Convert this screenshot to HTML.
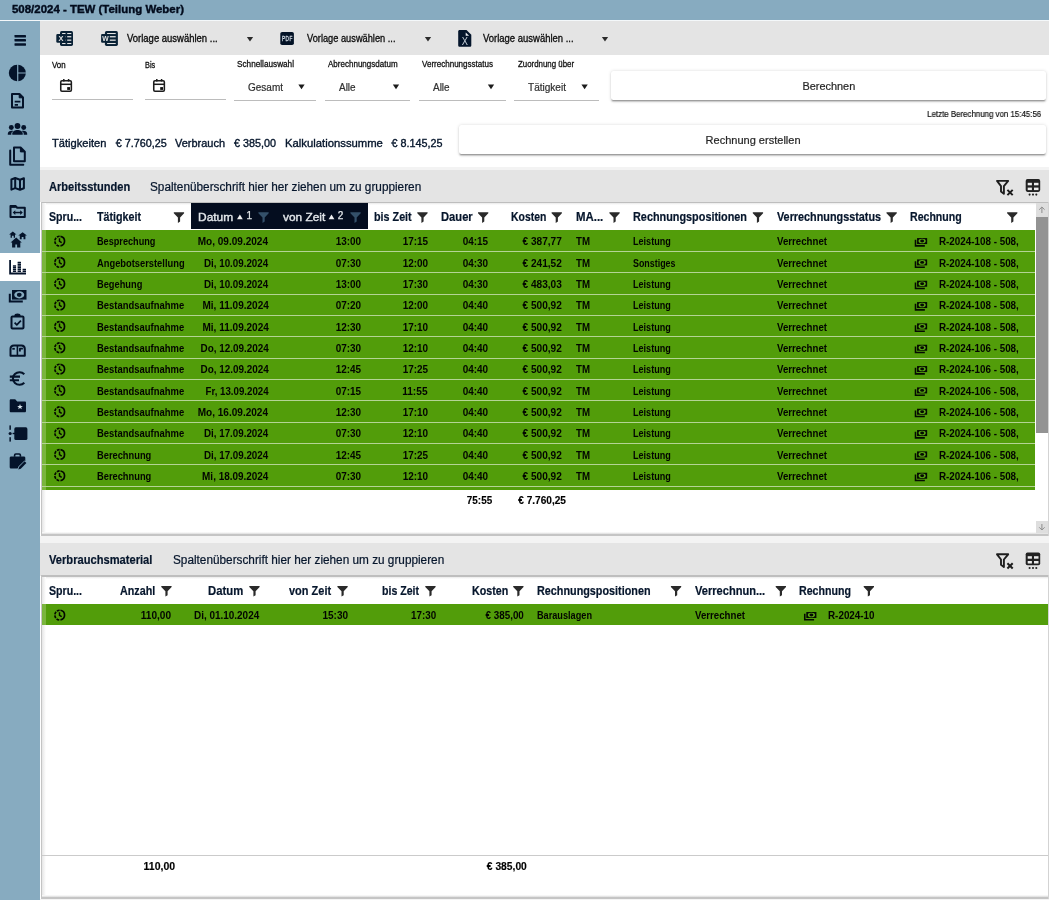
<!DOCTYPE html>
<html lang="de"><head><meta charset="utf-8"><title>508/2024 - TEW (Teilung Weber)</title>
<style>
html,body{margin:0;padding:0}
body{width:1049px;height:900px;position:relative;overflow:hidden;background:#fff;font-family:"Liberation Sans",sans-serif;color:#06162c}
#bg div{position:absolute}
#tx{will-change:transform}
#tx span{position:absolute;white-space:pre;display:block}
#ic{will-change:transform}
#ic svg{position:absolute;overflow:visible}
</style></head><body>
<div id="bg">
<div style="left:0px;top:0px;width:1049px;height:20px;background:#87abc0;"></div>
<div style="left:0px;top:20px;width:1049px;height:1px;background:#f4f8fa;"></div>
<div style="left:0px;top:21px;width:40px;height:879px;background:#87abc0;"></div>
<div style="left:0px;top:253px;width:40px;height:28px;background:#fff;"></div>
<div style="left:40px;top:21px;width:1009px;height:34px;background:#e4e4e4;"></div>
<div style="left:52px;top:99px;width:81px;height:1px;background:#bcbcbc;"></div>
<div style="left:145px;top:99px;width:81px;height:1px;background:#bcbcbc;"></div>
<div style="left:233.5px;top:100px;width:82.5px;height:1px;background:#bcbcbc;"></div>
<div style="left:324.5px;top:100px;width:85.5px;height:1px;background:#bcbcbc;"></div>
<div style="left:418.5px;top:100px;width:87.5px;height:1px;background:#bcbcbc;"></div>
<div style="left:513.5px;top:100px;width:85.5px;height:1px;background:#bcbcbc;"></div>
<div style="left:610.6px;top:71.2px;width:435.6px;height:28.7px;background:#fff;border-radius:2.5px;box-shadow:0 2px 1.2px -1.3px rgba(0,0,0,.24),0 1.5px 1.6px rgba(0,0,0,.15),0 .8px 3.6px rgba(0,0,0,.14);"></div>
<div style="left:458.8px;top:125.2px;width:587.4px;height:28.6px;background:#fff;border-radius:2.5px;box-shadow:0 2px 1.2px -1.3px rgba(0,0,0,.24),0 1.5px 1.6px rgba(0,0,0,.15),0 .8px 3.6px rgba(0,0,0,.14);"></div>
<div style="left:40px;top:167.3px;width:1009px;height:2.6px;background:#f3f3f3;"></div>
<div style="left:40px;top:169.9px;width:1009px;height:32.29999999999998px;background:#e4e4e4;"></div>
<div style="left:40.7px;top:201.6px;width:1008.3px;height:1.4px;background:#bebebe;"></div>
<div style="left:42px;top:203.0px;width:1007px;height:2.4px;background:linear-gradient(180deg,#e9e9e9,#fff);"></div>
<div style="left:40.7px;top:202.2px;width:1.5px;height:332.50000000000006px;background:#c4c4c4;"></div>
<div style="left:42.2px;top:203.0px;width:3.6px;height:330.70000000000005px;background:linear-gradient(90deg,#e6e6e6,#fff);"></div>
<div style="left:42.2px;top:531.5px;width:1006.8px;height:2.2px;background:linear-gradient(180deg,#fff,#dcdcdc);"></div>
<div style="left:40.7px;top:533.7px;width:1008.3px;height:2px;background:#c5c5c5;"></div>
<div style="left:40px;top:535.7px;width:1009px;height:8px;background:#f4f4f4;"></div>
<div style="left:190.7px;top:202.79999999999998px;width:177.1px;height:26.669999999999998px;background:#040d1f;"></div>
<div style="left:42px;top:230.17px;width:992.9px;height:259.43000000000006px;background:#529d0a;"></div>
<div style="left:42px;top:230.17px;width:4.2px;height:259.43000000000006px;background:#7ab53d;"></div>
<div style="left:42px;top:251.003px;width:992.9px;height:1.05px;background:#b4d494;"></div>
<div style="left:42px;top:272.336px;width:992.9px;height:1.05px;background:#b4d494;"></div>
<div style="left:42px;top:293.669px;width:992.9px;height:1.05px;background:#b4d494;"></div>
<div style="left:42px;top:315.00199999999995px;width:992.9px;height:1.05px;background:#b4d494;"></div>
<div style="left:42px;top:336.335px;width:992.9px;height:1.05px;background:#b4d494;"></div>
<div style="left:42px;top:357.668px;width:992.9px;height:1.05px;background:#b4d494;"></div>
<div style="left:42px;top:379.001px;width:992.9px;height:1.05px;background:#b4d494;"></div>
<div style="left:42px;top:400.33399999999995px;width:992.9px;height:1.05px;background:#b4d494;"></div>
<div style="left:42px;top:421.667px;width:992.9px;height:1.05px;background:#b4d494;"></div>
<div style="left:42px;top:443.0px;width:992.9px;height:1.05px;background:#b4d494;"></div>
<div style="left:42px;top:464.33299999999997px;width:992.9px;height:1.05px;background:#b4d494;"></div>
<div style="left:42px;top:485.66599999999994px;width:992.9px;height:1.05px;background:#b4d494;"></div>
<div style="left:1036px;top:203.0px;width:11.7px;height:13.7px;background:#dedede;"></div>
<div style="left:1036px;top:521.2px;width:11.7px;height:11.6px;background:#dedede;"></div>
<div style="left:1036px;top:216.7px;width:11.7px;height:216.7px;background:#939393;"></div>
<div style="left:40px;top:540.3px;width:1009px;height:2.6px;background:#f3f3f3;"></div>
<div style="left:40px;top:542.9px;width:1009px;height:32.89999999999998px;background:#e4e4e4;"></div>
<div style="left:40.7px;top:575.1999999999999px;width:1008.3px;height:1.4px;background:#bebebe;"></div>
<div style="left:42px;top:576.5999999999999px;width:1007px;height:2.4px;background:linear-gradient(180deg,#e9e9e9,#fff);"></div>
<div style="left:40.7px;top:575.8px;width:1.5px;height:322.30000000000007px;background:#c4c4c4;"></div>
<div style="left:42.2px;top:576.5999999999999px;width:3.6px;height:320.50000000000006px;background:linear-gradient(90deg,#e6e6e6,#fff);"></div>
<div style="left:42.2px;top:894.9px;width:1006.8px;height:2.2px;background:linear-gradient(180deg,#fff,#dcdcdc);"></div>
<div style="left:40.7px;top:897.1px;width:1008.3px;height:2px;background:#c5c5c5;"></div>
<div style="left:40px;top:899.1px;width:1009px;height:8px;background:#f4f4f4;"></div>
<div style="left:42px;top:603.8px;width:1007px;height:20.8px;background:#529d0a;"></div>
<div style="left:42px;top:603.8px;width:4.2px;height:20.8px;background:#7ab53d;"></div>
<div style="left:42.2px;top:855.1px;width:1006.8px;height:1.2px;background:#cbcbcb;"></div>
<div style="left:1047.7px;top:201.6px;width:1.3px;height:334.1000000000001px;background:#d3d3d3;"></div>
<div style="left:1047.7px;top:575.1999999999999px;width:1.3px;height:323.9000000000001px;background:#d3d3d3;"></div>
</div>
<div id="ic">
<svg width="1049" height="900" viewBox="0 0 1049 900" style="left:0;top:0">
<rect x="14.5" y="35" width="11.5" height="2.4" rx=".4" fill="#04132a"/>
<rect x="14.5" y="39.1" width="11.5" height="2.4" rx=".4" fill="#04132a"/>
<rect x="14.5" y="43.3" width="11.5" height="2.4" rx=".4" fill="#04132a"/>
<g fill="#04132a"><path d="M17.1 64.7 A8.3 8.3 0 0 0 17.1 81.3 Z"/><path d="M18.3 64.7 A8.3 8.3 0 0 1 25.8 72.4 L18.3 72.4 Z"/><path d="M18.3 73.6 L25.8 73.6 A8.3 8.3 0 0 1 18.3 81.3 Z"/></g>
<g fill="none" stroke="#04132a" stroke-width="2" stroke-linejoin="round"><path d="M12 94 H19.5 L23 97.5 V107.5 H12 Z"/><path d="M19.2 94.2 V97.8 H22.8 Z" stroke-width="1" fill="#04132a"/><path d="M14.7 101.6 H20.4 M14.7 104.9 H18" stroke-width="1.6"/></g>
<g fill="#04132a"><circle cx="17.5" cy="126" r="2.9"/><circle cx="11.3" cy="127.5" r="2.45"/><circle cx="23.7" cy="127.5" r="2.45"/><path d="M12.3 134.8 V133.6 C12.3 131 15 129.9 17.5 129.9 S22.7 131 22.7 133.6 V134.8 Z"/><path d="M7.8 134.8 V133.8 C7.8 131.7 9.6 130.8 11.6 130.8 C12.3 130.8 12.9 130.9 13.4 131.05 C11.9 131.9 11.3 132.7 11.3 133.8 V134.8 Z"/><path d="M27.2 134.8 V133.8 C27.2 131.7 25.4 130.8 23.4 130.8 C22.7 130.8 22.1 130.9 21.6 131.05 C23.1 131.9 23.7 132.7 23.7 133.8 V134.8 Z"/></g>
<g fill="none" stroke="#04132a" stroke-width="2" stroke-linejoin="round"><path d="M14 147.5 H20.6 L24.8 151.7 V161.3 H14 Z"/><path d="M20.4 147.8 V151.9 H24.5 Z" stroke-width="1" fill="#04132a"/><path d="M10.2 150.5 V164.8 H23.3" stroke-linecap="round"/></g>
<g fill="none" stroke="#04132a" stroke-width="2" stroke-linejoin="round"><path d="M11.4 179.5 L15.2 178 L20 179.7 L23.9 178.2 V188.3 L20 189.8 L15.2 188.1 L11.4 189.6 Z"/><path d="M15.2 178 V188.1 M20 179.7 V189.8"/></g>
<g fill="none" stroke="#04132a" stroke-width="2" stroke-linejoin="round"><path d="M10.5 206 H15.5 L17.2 207.8 H24.8 V217 H10.5 Z"/><path d="M10.5 206.6 H15.8" stroke-width="2.6"/></g>
<g fill="#04132a"><rect x="14.5" y="211.8" width="6.5" height="1.5"/><path d="M15.3 210.2 V214.9 L12.7 212.55 Z M20.2 210.2 V214.9 L22.8 212.55 Z"/></g>
<g fill="#04132a"><path d="M12.8 231.4 L16.5 234.424 H15.0 V237.70000000000002 H13.700000000000001 V235.81000000000003 H11.9 V237.70000000000002 H10.600000000000001 V234.424 H9.100000000000001 Z"/><path d="M22.6 232.2 L26.900000000000002 235.56 H25.400000000000002 V239.2 H23.5 V237.1 H21.700000000000003 V239.2 H19.8 V235.56 H18.3 Z"/><path d="M16.2 237.6 L21.8 242.4 H20.3 V247.6 H17.099999999999998 V244.6 H15.299999999999999 V247.6 H12.1 V242.4 H10.6 Z"/></g>
<g fill="#04132a"><path d="M9.2 260 H11 V272.6 H26 V274.5 H9.2 Z"/>
<rect x="12.9" y="270.55" width="3.2" height="1.45" rx=".3"/><rect x="12.9" y="268.80" width="3.2" height="1.45" rx=".3"/><rect x="12.9" y="267.05" width="3.2" height="1.45" rx=".3"/><rect x="12.9" y="265.30" width="3.2" height="1.45" rx=".3"/><rect x="17.6" y="270.55" width="3.4" height="1.45" rx=".3"/><rect x="17.6" y="268.80" width="3.4" height="1.45" rx=".3"/><rect x="17.6" y="267.05" width="3.4" height="1.45" rx=".3"/><rect x="17.6" y="265.30" width="3.4" height="1.45" rx=".3"/><rect x="17.6" y="263.55" width="3.4" height="1.45" rx=".3"/><rect x="17.6" y="261.80" width="3.4" height="1.45" rx=".3"/><rect x="22.6" y="270.55" width="3.4" height="1.45" rx=".3"/><rect x="22.6" y="268.80" width="3.4" height="1.45" rx=".3"/></g>
<g><path d="M9.8 293.8 V301.5 H22.8" fill="none" stroke="#04132a" stroke-width="2"/><rect x="12" y="290" width="14.5" height="9.6" fill="#04132a"/><ellipse cx="19.25" cy="294.8" rx="5" ry="3.6" fill="#87abc0"/><ellipse cx="19.25" cy="294.8" rx="2.4" ry="2.1" fill="#04132a"/></g>
<g fill="none" stroke="#04132a" stroke-linejoin="round"><rect x="11.5" y="316.6" width="12" height="12" rx="1" stroke-width="2"/><path d="M15.2 316.4 V315.6 C15.2 314 19.8 314 19.8 315.6 V316.4" stroke-width="1.6" fill="#04132a"/><path d="M14.6 322.6 L16.8 324.8 L20.9 320.6" stroke-width="1.7"/></g>
<g fill="none" stroke="#04132a" stroke-width="2" stroke-linejoin="round"><path d="M10.5 355.8 V349 C10.5 346.6 12 345.5 14 345.5 H21.5 C23.6 345.5 24.8 346.8 24.8 349 V355.8 Z"/><path d="M17.4 346 V355.5" stroke-width="1.6"/><path d="M12.3 348.8 H14.8" stroke-width="1.8"/><path d="M19.9 351.6 V348.7 H22.9" stroke-width="1.8"/></g>
<g fill="none" stroke="#04132a" stroke-width="2.1" stroke-linecap="butt"><path d="M24.3 374.2 A6.6 6.2 0 1 0 24.3 382.8"/><path d="M9.8 376.6 H20 M9.8 380.3 H19"/></g>
<g><path d="M9.7 400.6 C9.7 399.8 10.2 399.3 11 399.3 H15.2 L17.2 401.4 H24.8 C25.6 401.4 26 401.9 26 402.7 V411 C26 411.8 25.5 412.3 24.7 412.3 H11 C10.2 412.3 9.7 411.8 9.7 411 Z" fill="#04132a"/><path d="M20 403.9 L20.75 405.9 L22.85 405.95 L21.2 407.25 L21.8 409.3 L20 408.1 L18.2 409.3 L18.8 407.25 L17.15 405.95 L19.25 405.9 Z" fill="#d5e2ea"/></g>
<g fill="#04132a"><rect x="9.4" y="425.4" width="1.5" height="4.4"/><rect x="9.4" y="437.2" width="1.5" height="4.4"/><circle cx="10.15" cy="433.5" r="1.55"/><rect x="12.6" y="432.8" width="2.5" height="1.4"/><rect x="14.3" y="427.3" width="13.1" height="12.7" rx="1.6"/></g>
<g><path d="M9.7 458 C9.7 457 10.3 456.5 11.2 456.5 H23.8 C24.7 456.5 25.3 457 25.3 458 V460.2 L17.5 468.5 H11.2 C10.3 468.5 9.7 468 9.7 467 Z" fill="#04132a"/><path d="M14.6 456.8 V455.2 C14.6 454.4 15.1 454 15.8 454 H19.2 C19.9 454 20.4 454.4 20.4 455.2 V456.8" fill="none" stroke="#04132a" stroke-width="1.6"/><path d="M18.3 469.4 L19 466.9 L24.6 461.3 L26.4 463.1 L20.8 468.7 Z" fill="#04132a" stroke="#87abc0" stroke-width="1.3" paint-order="stroke"/></g>
<rect x="60" y="31.1" width="13" height="14.8" rx="1.6" fill="#0a2236"/><rect x="62.1" y="33.0" width="3.4" height="1.05" fill="#e4e4e4"/><rect x="62.1" y="36.1" width="3.4" height="1.25" fill="#e4e4e4"/><rect x="62.1" y="39.55" width="3.4" height="1.25" fill="#e4e4e4"/><rect x="62.1" y="43.0" width="3.4" height="1.05" fill="#e4e4e4"/><rect x="67.2" y="33.0" width="4.1" height="1.05" fill="#e4e4e4"/><rect x="67.2" y="36.1" width="4.1" height="1.25" fill="#e4e4e4"/><rect x="67.2" y="39.55" width="4.1" height="1.25" fill="#e4e4e4"/><rect x="67.2" y="43.0" width="4.1" height="1.05" fill="#e4e4e4"/>
<rect x="56.3" y="33.9" width="9.1" height="8.9" rx="1.2" fill="#0a2236"/>
<text x="60.85" y="41.1" font-family="Liberation Sans,sans-serif" font-size="7.4" font-weight="700" fill="#e4e4e4" text-anchor="middle">X</text>
<rect x="104.9" y="31.1" width="13" height="14.8" rx="1.6" fill="#0a2236"/><rect x="107.1" y="33.0" width="8.6" height="1.05" fill="#e4e4e4"/><rect x="107.1" y="36.1" width="8.6" height="1.25" fill="#e4e4e4"/><rect x="107.1" y="39.55" width="8.6" height="1.25" fill="#e4e4e4"/><rect x="107.1" y="43.0" width="8.6" height="1.05" fill="#e4e4e4"/>
<rect x="101.1" y="33.9" width="8.7" height="8.9" rx="1.2" fill="#0a2236"/>
<text x="105.45" y="41" font-family="Liberation Sans,sans-serif" font-size="6.8" font-weight="700" fill="#e4e4e4" text-anchor="middle">W</text>
<rect x="280.3" y="31.9" width="13.6" height="13.1" rx="1.8" fill="#031226"/>
<text transform="translate(281.9 40.85) scale(.7 1)" font-family="Liberation Sans,sans-serif" font-size="6.7" letter-spacing=".75" fill="#d4dde6" stroke="#d4dde6" stroke-width=".3">PDF</text>
<path d="M458.2 31.5 C458.2 30.5 458.8 30 459.7 30 H466.5 L471.3 34.8 V45.3 C471.3 46.3 470.7 46.8 469.8 46.8 H459.7 C458.8 46.8 458.2 46.3 458.2 45.3 Z" fill="#04152b"/>
<path d="M465.7 32.4 V35.8 H469.1 Z" fill="#e8edf2"/>
<text x="464.85" y="44.8" font-family="Liberation Sans,sans-serif" font-size="10.6" fill="#c9d3dc" text-anchor="middle" textLength="6.2" lengthAdjust="spacingAndGlyphs">X</text>
<g fill="none" stroke="#1c1c1c"><rect x="60.75" y="80.7" width="10.6" height="10.6" rx="1.2" stroke-width="1.55"/><path d="M60.75 84.3 H71.35" stroke-width="1.5"/><path d="M63.800000000000004 79 V81.6 M68.6 79 V81.6" stroke-width="1.5"/></g><rect x="67.2" y="87.1" width="2.8" height="2.8" fill="#111"/>
<g fill="none" stroke="#1c1c1c"><rect x="153.75" y="80.7" width="10.6" height="10.6" rx="1.2" stroke-width="1.55"/><path d="M153.75 84.3 H164.35" stroke-width="1.5"/><path d="M156.79999999999998 79 V81.6 M161.6 79 V81.6" stroke-width="1.5"/></g><rect x="160.2" y="87.1" width="2.8" height="2.8" fill="#111"/>
<path d="M246.85 36.9 H253.15 L250 41.5 Z" fill="#2b2b2b"/>
<path d="M424.85 36.9 H431.15 L428 41.5 Z" fill="#2b2b2b"/>
<path d="M601.85 36.9 H608.15 L605 41.5 Z" fill="#2b2b2b"/>
<path d="M298.35 84.6 H304.65 L301.5 89.2 Z" fill="#1c1c1c"/>
<path d="M392.85 84.6 H399.15 L396 89.2 Z" fill="#1c1c1c"/>
<path d="M487.85 84.6 H494.15 L491 89.2 Z" fill="#1c1c1c"/>
<path d="M581.45 84.6 H587.75 L584.6 89.2 Z" fill="#1c1c1c"/>
<path d="M237.0 219.3 H242.8 L239.9 214.6 Z" fill="#f0f0f0"/>
<path d="M328.6 219.3 H334.4 L331.5 214.6 Z" fill="#f0f0f0"/>
<path d="M173.8 212.3 H184.10000000000002 V213.20000000000002 L180.10000000000002 217.5 V221.5 L177.9 222.9 V217.5 L173.8 213.20000000000002 Z" fill="#2a2a2a"/>
<path d="M417.3 212.3 H427.6 V213.20000000000002 L423.6 217.5 V221.5 L421.40000000000003 222.9 V217.5 L417.3 213.20000000000002 Z" fill="#2a2a2a"/>
<path d="M478 212.3 H488.3 V213.20000000000002 L484.3 217.5 V221.5 L482.1 222.9 V217.5 L478 213.20000000000002 Z" fill="#2a2a2a"/>
<path d="M551.6 212.3 H561.9 V213.20000000000002 L557.9 217.5 V221.5 L555.7 222.9 V217.5 L551.6 213.20000000000002 Z" fill="#2a2a2a"/>
<path d="M609.4 212.3 H619.6999999999999 V213.20000000000002 L615.6999999999999 217.5 V221.5 L613.5 222.9 V217.5 L609.4 213.20000000000002 Z" fill="#2a2a2a"/>
<path d="M752.8 212.3 H763.0999999999999 V213.20000000000002 L759.0999999999999 217.5 V221.5 L756.9 222.9 V217.5 L752.8 213.20000000000002 Z" fill="#2a2a2a"/>
<path d="M886.5 212.3 H896.8 V213.20000000000002 L892.8 217.5 V221.5 L890.6 222.9 V217.5 L886.5 213.20000000000002 Z" fill="#2a2a2a"/>
<path d="M1007.1 212.3 H1017.4 V213.20000000000002 L1013.4 217.5 V221.5 L1011.2 222.9 V217.5 L1007.1 213.20000000000002 Z" fill="#2a2a2a"/>
<path d="M258.4 212.3 H268.7 V213.20000000000002 L264.7 217.5 V221.5 L262.5 222.9 V217.5 L258.4 213.20000000000002 Z" fill="#34506a"/>
<path d="M350.4 212.3 H360.7 V213.20000000000002 L356.7 217.5 V221.5 L354.5 222.9 V217.5 L350.4 213.20000000000002 Z" fill="#34506a"/>
<path d="M161.3 586 H171.60000000000002 V586.9 L167.60000000000002 591.2 V595.2 L165.4 596.6 V591.2 L161.3 586.9 Z" fill="#2a2a2a"/>
<path d="M249.3 586 H259.6 V586.9 L255.60000000000002 591.2 V595.2 L253.4 596.6 V591.2 L249.3 586.9 Z" fill="#2a2a2a"/>
<path d="M337.4 586 H347.7 V586.9 L343.7 591.2 V595.2 L341.5 596.6 V591.2 L337.4 586.9 Z" fill="#2a2a2a"/>
<path d="M425.3 586 H435.6 V586.9 L431.6 591.2 V595.2 L429.40000000000003 596.6 V591.2 L425.3 586.9 Z" fill="#2a2a2a"/>
<path d="M513.2 586 H523.5 V586.9 L519.5 591.2 V595.2 L517.3000000000001 596.6 V591.2 L513.2 586.9 Z" fill="#2a2a2a"/>
<path d="M670.9 586 H681.1999999999999 V586.9 L677.1999999999999 591.2 V595.2 L675.0 596.6 V591.2 L670.9 586.9 Z" fill="#2a2a2a"/>
<path d="M775.7 586 H786.0 V586.9 L782.0 591.2 V595.2 L779.8000000000001 596.6 V591.2 L775.7 586.9 Z" fill="#2a2a2a"/>
<path d="M863.7 586 H874.0 V586.9 L870.0 591.2 V595.2 L867.8000000000001 596.6 V591.2 L863.7 586.9 Z" fill="#2a2a2a"/>
<g fill="none" stroke="#1e1e1e" stroke-width="1.9" stroke-linejoin="round"><path d="M997 180.9 H1008.2 L1003.9 186.10000000000002 V193.70000000000002 L1001 191.4 V186.10000000000002 Z"/><path d="M1007.4 189.9 L1012.7 195.10000000000002 M1012.7 189.9 L1007.4 195.10000000000002" stroke-width="2"/></g>
<rect x="1025.7" y="179.1" width="14.5" height="12.8" rx="1.8" fill="#222"/><rect x="1027.7" y="182.79999999999998" width="4.2" height="2.5" fill="#ececec"/><rect x="1027.7" y="187.6" width="4.2" height="2.5" fill="#ececec"/><rect x="1034" y="182.79999999999998" width="4.5" height="2.5" fill="#ececec"/><rect x="1034" y="187.6" width="4.5" height="2.5" fill="#ececec"/><circle cx="1029.6" cy="194.6" r="1.05" fill="#222"/><circle cx="1033" cy="194.6" r="1.05" fill="#222"/><circle cx="1036.3" cy="194.6" r="1.05" fill="#222"/>
<g fill="none" stroke="#1e1e1e" stroke-width="1.9" stroke-linejoin="round"><path d="M997 554.3000000000001 H1008.2 L1003.9 559.5 V567.1 L1001 564.8000000000001 V559.5 Z"/><path d="M1007.4 563.3000000000001 L1012.7 568.5 M1012.7 563.3000000000001 L1007.4 568.5" stroke-width="2"/></g>
<rect x="1025.7" y="552.5" width="14.5" height="12.8" rx="1.8" fill="#222"/><rect x="1027.7" y="556.2" width="4.2" height="2.5" fill="#ececec"/><rect x="1027.7" y="561.0" width="4.2" height="2.5" fill="#ececec"/><rect x="1034" y="556.2" width="4.5" height="2.5" fill="#ececec"/><rect x="1034" y="561.0" width="4.5" height="2.5" fill="#ececec"/><circle cx="1029.6" cy="568.0" r="1.05" fill="#222"/><circle cx="1033" cy="568.0" r="1.05" fill="#222"/><circle cx="1036.3" cy="568.0" r="1.05" fill="#222"/>
<g fill="none" stroke="#030700" stroke-width="1.65"><path d="M60.46 236.33 A4.85 4.85 0 0 1 60.46 245.91"/><path d="M59.7 245.96999999999997 A4.85 4.85 0 0 1 59.7 236.26999999999998" stroke-dasharray="2.85 0.96" stroke-dashoffset="-0.48"/><path d="M59.5 238.21999999999997 V241.31999999999996 L61.7 242.71999999999997" stroke-width="1.45"/></g>
<g><path d="M915.5 239.87 V245.87 H924.8499999999999" fill="none" stroke="#050a02" stroke-width="1.55"/><rect x="917.05" y="238.07" width="10.1" height="6" fill="#050a02"/><ellipse cx="922.15" cy="241.07" rx="3.6" ry="2.3" fill="#5aa814"/><ellipse cx="922.15" cy="241.07" rx="1.95" ry="1.45" fill="#050a02"/></g>
<g fill="none" stroke="#030700" stroke-width="1.65"><path d="M60.46 257.66 A4.85 4.85 0 0 1 60.46 267.24"/><path d="M59.7 267.303 A4.85 4.85 0 0 1 59.7 257.60299999999995" stroke-dasharray="2.85 0.96" stroke-dashoffset="-0.48"/><path d="M59.5 259.553 V262.65299999999996 L61.7 264.053" stroke-width="1.45"/></g>
<g><path d="M915.5 261.203 V267.203 H924.8499999999999" fill="none" stroke="#050a02" stroke-width="1.55"/><rect x="917.05" y="259.40299999999996" width="10.1" height="6" fill="#050a02"/><ellipse cx="922.15" cy="262.40299999999996" rx="3.6" ry="2.3" fill="#5aa814"/><ellipse cx="922.15" cy="262.40299999999996" rx="1.95" ry="1.45" fill="#050a02"/></g>
<g fill="none" stroke="#030700" stroke-width="1.65"><path d="M60.46 279.00 A4.85 4.85 0 0 1 60.46 288.58"/><path d="M59.7 288.636 A4.85 4.85 0 0 1 59.7 278.936" stroke-dasharray="2.85 0.96" stroke-dashoffset="-0.48"/><path d="M59.5 280.886 V283.986 L61.7 285.386" stroke-width="1.45"/></g>
<g><path d="M915.5 282.536 V288.536 H924.8499999999999" fill="none" stroke="#050a02" stroke-width="1.55"/><rect x="917.05" y="280.736" width="10.1" height="6" fill="#050a02"/><ellipse cx="922.15" cy="283.736" rx="3.6" ry="2.3" fill="#5aa814"/><ellipse cx="922.15" cy="283.736" rx="1.95" ry="1.45" fill="#050a02"/></g>
<g fill="none" stroke="#030700" stroke-width="1.65"><path d="M60.46 300.33 A4.85 4.85 0 0 1 60.46 309.91"/><path d="M59.7 309.969 A4.85 4.85 0 0 1 59.7 300.26899999999995" stroke-dasharray="2.85 0.96" stroke-dashoffset="-0.48"/><path d="M59.5 302.219 V305.31899999999996 L61.7 306.719" stroke-width="1.45"/></g>
<g><path d="M915.5 303.86899999999997 V309.86899999999997 H924.8499999999999" fill="none" stroke="#050a02" stroke-width="1.55"/><rect x="917.05" y="302.06899999999996" width="10.1" height="6" fill="#050a02"/><ellipse cx="922.15" cy="305.06899999999996" rx="3.6" ry="2.3" fill="#5aa814"/><ellipse cx="922.15" cy="305.06899999999996" rx="1.95" ry="1.45" fill="#050a02"/></g>
<g fill="none" stroke="#030700" stroke-width="1.65"><path d="M60.46 321.66 A4.85 4.85 0 0 1 60.46 331.24"/><path d="M59.7 331.30199999999996 A4.85 4.85 0 0 1 59.7 321.6019999999999" stroke-dasharray="2.85 0.96" stroke-dashoffset="-0.48"/><path d="M59.5 323.55199999999996 V326.65199999999993 L61.7 328.05199999999996" stroke-width="1.45"/></g>
<g><path d="M915.5 325.20199999999994 V331.20199999999994 H924.8499999999999" fill="none" stroke="#050a02" stroke-width="1.55"/><rect x="917.05" y="323.40199999999993" width="10.1" height="6" fill="#050a02"/><ellipse cx="922.15" cy="326.40199999999993" rx="3.6" ry="2.3" fill="#5aa814"/><ellipse cx="922.15" cy="326.40199999999993" rx="1.95" ry="1.45" fill="#050a02"/></g>
<g fill="none" stroke="#030700" stroke-width="1.65"><path d="M60.46 342.99 A4.85 4.85 0 0 1 60.46 352.58"/><path d="M59.7 352.635 A4.85 4.85 0 0 1 59.7 342.93499999999995" stroke-dasharray="2.85 0.96" stroke-dashoffset="-0.48"/><path d="M59.5 344.885 V347.98499999999996 L61.7 349.385" stroke-width="1.45"/></g>
<g><path d="M915.5 346.53499999999997 V352.53499999999997 H924.8499999999999" fill="none" stroke="#050a02" stroke-width="1.55"/><rect x="917.05" y="344.73499999999996" width="10.1" height="6" fill="#050a02"/><ellipse cx="922.15" cy="347.73499999999996" rx="3.6" ry="2.3" fill="#5aa814"/><ellipse cx="922.15" cy="347.73499999999996" rx="1.95" ry="1.45" fill="#050a02"/></g>
<g fill="none" stroke="#030700" stroke-width="1.65"><path d="M60.46 364.33 A4.85 4.85 0 0 1 60.46 373.91"/><path d="M59.7 373.968 A4.85 4.85 0 0 1 59.7 364.268" stroke-dasharray="2.85 0.96" stroke-dashoffset="-0.48"/><path d="M59.5 366.218 V369.318 L61.7 370.718" stroke-width="1.45"/></g>
<g><path d="M915.5 367.868 V373.868 H924.8499999999999" fill="none" stroke="#050a02" stroke-width="1.55"/><rect x="917.05" y="366.068" width="10.1" height="6" fill="#050a02"/><ellipse cx="922.15" cy="369.068" rx="3.6" ry="2.3" fill="#5aa814"/><ellipse cx="922.15" cy="369.068" rx="1.95" ry="1.45" fill="#050a02"/></g>
<g fill="none" stroke="#030700" stroke-width="1.65"><path d="M60.46 385.66 A4.85 4.85 0 0 1 60.46 395.24"/><path d="M59.7 395.301 A4.85 4.85 0 0 1 59.7 385.60099999999994" stroke-dasharray="2.85 0.96" stroke-dashoffset="-0.48"/><path d="M59.5 387.551 V390.65099999999995 L61.7 392.051" stroke-width="1.45"/></g>
<g><path d="M915.5 389.20099999999996 V395.20099999999996 H924.8499999999999" fill="none" stroke="#050a02" stroke-width="1.55"/><rect x="917.05" y="387.40099999999995" width="10.1" height="6" fill="#050a02"/><ellipse cx="922.15" cy="390.40099999999995" rx="3.6" ry="2.3" fill="#5aa814"/><ellipse cx="922.15" cy="390.40099999999995" rx="1.95" ry="1.45" fill="#050a02"/></g>
<g fill="none" stroke="#030700" stroke-width="1.65"><path d="M60.46 406.99 A4.85 4.85 0 0 1 60.46 416.57"/><path d="M59.7 416.63399999999996 A4.85 4.85 0 0 1 59.7 406.9339999999999" stroke-dasharray="2.85 0.96" stroke-dashoffset="-0.48"/><path d="M59.5 408.88399999999996 V411.9839999999999 L61.7 413.38399999999996" stroke-width="1.45"/></g>
<g><path d="M915.5 410.53399999999993 V416.53399999999993 H924.8499999999999" fill="none" stroke="#050a02" stroke-width="1.55"/><rect x="917.05" y="408.7339999999999" width="10.1" height="6" fill="#050a02"/><ellipse cx="922.15" cy="411.7339999999999" rx="3.6" ry="2.3" fill="#5aa814"/><ellipse cx="922.15" cy="411.7339999999999" rx="1.95" ry="1.45" fill="#050a02"/></g>
<g fill="none" stroke="#030700" stroke-width="1.65"><path d="M60.46 428.33 A4.85 4.85 0 0 1 60.46 437.91"/><path d="M59.7 437.967 A4.85 4.85 0 0 1 59.7 428.26699999999994" stroke-dasharray="2.85 0.96" stroke-dashoffset="-0.48"/><path d="M59.5 430.217 V433.31699999999995 L61.7 434.717" stroke-width="1.45"/></g>
<g><path d="M915.5 431.86699999999996 V437.86699999999996 H924.8499999999999" fill="none" stroke="#050a02" stroke-width="1.55"/><rect x="917.05" y="430.06699999999995" width="10.1" height="6" fill="#050a02"/><ellipse cx="922.15" cy="433.06699999999995" rx="3.6" ry="2.3" fill="#5aa814"/><ellipse cx="922.15" cy="433.06699999999995" rx="1.95" ry="1.45" fill="#050a02"/></g>
<g fill="none" stroke="#030700" stroke-width="1.65"><path d="M60.46 449.66 A4.85 4.85 0 0 1 60.46 459.24"/><path d="M59.7 459.3 A4.85 4.85 0 0 1 59.7 449.59999999999997" stroke-dasharray="2.85 0.96" stroke-dashoffset="-0.48"/><path d="M59.5 451.55 V454.65 L61.7 456.05" stroke-width="1.45"/></g>
<g><path d="M915.5 453.2 V459.2 H924.8499999999999" fill="none" stroke="#050a02" stroke-width="1.55"/><rect x="917.05" y="451.4" width="10.1" height="6" fill="#050a02"/><ellipse cx="922.15" cy="454.4" rx="3.6" ry="2.3" fill="#5aa814"/><ellipse cx="922.15" cy="454.4" rx="1.95" ry="1.45" fill="#050a02"/></g>
<g fill="none" stroke="#030700" stroke-width="1.65"><path d="M60.46 470.99 A4.85 4.85 0 0 1 60.46 480.57"/><path d="M59.7 480.633 A4.85 4.85 0 0 1 59.7 470.93299999999994" stroke-dasharray="2.85 0.96" stroke-dashoffset="-0.48"/><path d="M59.5 472.883 V475.98299999999995 L61.7 477.383" stroke-width="1.45"/></g>
<g><path d="M915.5 474.53299999999996 V480.53299999999996 H924.8499999999999" fill="none" stroke="#050a02" stroke-width="1.55"/><rect x="917.05" y="472.73299999999995" width="10.1" height="6" fill="#050a02"/><ellipse cx="922.15" cy="475.73299999999995" rx="3.6" ry="2.3" fill="#5aa814"/><ellipse cx="922.15" cy="475.73299999999995" rx="1.95" ry="1.45" fill="#050a02"/></g>
<g fill="none" stroke="#030700" stroke-width="1.65"><path d="M60.46 610.31 A4.85 4.85 0 0 1 60.46 619.89"/><path d="M59.7 619.9499999999999 A4.85 4.85 0 0 1 59.7 610.2499999999999" stroke-dasharray="2.85 0.96" stroke-dashoffset="-0.48"/><path d="M59.5 612.1999999999999 V615.3 L61.7 616.6999999999999" stroke-width="1.45"/></g>
<g><path d="M804.75 613.8 V619.8 H814.0999999999999" fill="none" stroke="#050a02" stroke-width="1.55"/><rect x="806.3" y="612.0" width="10.1" height="6" fill="#050a02"/><ellipse cx="811.4" cy="615.0" rx="3.6" ry="2.3" fill="#5aa814"/><ellipse cx="811.4" cy="615.0" rx="1.95" ry="1.45" fill="#050a02"/></g>
<g fill="none" stroke="#8c8c8c" stroke-width="1"><path d="M1041.9 207 V213 M1039.2 209.7 L1041.9 207 L1044.6 209.7"/><path d="M1041.9 524 V530 M1039.2 527.3 L1041.9 530 L1044.6 527.3"/></g>
</svg>
</div>
<div id="tx">
<span style="top:1.00px;font-size:11.4px;line-height:16px;font-weight:700;color:#030c1d;-webkit-text-stroke:0.4px;left:12px;transform:scaleX(1.0052);transform-origin:0 0;">508/2024 - TEW (Teilung Weber)</span>
<span style="top:32.20px;font-size:10.1px;line-height:14px;color:#0c0c0c;-webkit-text-stroke:0.32px;left:127.3px;transform:scaleX(0.9396);transform-origin:0 0;">Vorlage auswählen ...</span>
<span style="top:32.20px;font-size:10.1px;line-height:14px;color:#0c0c0c;-webkit-text-stroke:0.3px;left:306.7px;transform:scaleX(0.9168);transform-origin:0 0;">Vorlage auswählen ...</span>
<span style="top:32.20px;font-size:10.1px;line-height:14px;color:#0c0c0c;-webkit-text-stroke:0.3px;left:483px;transform:scaleX(0.9386);transform-origin:0 0;">Vorlage auswählen ...</span>
<span style="top:59.10px;font-size:8.6px;line-height:12px;color:#111;-webkit-text-stroke:0.3px;left:52px;transform:scaleX(0.9172);transform-origin:0 0;">Von</span>
<span style="top:59.10px;font-size:8.6px;line-height:12px;color:#111;-webkit-text-stroke:0.3px;left:145px;transform:scaleX(0.8533);transform-origin:0 0;">Bis</span>
<span style="top:58.40px;font-size:8.6px;line-height:12px;color:#111;-webkit-text-stroke:0.28px;left:237px;transform:scaleX(0.9545);transform-origin:0 0;">Schnellauswahl</span>
<span style="top:58.40px;font-size:8.6px;line-height:12px;color:#111;-webkit-text-stroke:0.28px;left:328.4px;transform:scaleX(0.9338);transform-origin:0 0;">Abrechnungsdatum</span>
<span style="top:58.40px;font-size:8.6px;line-height:12px;color:#111;-webkit-text-stroke:0.28px;left:422px;transform:scaleX(0.9346);transform-origin:0 0;">Verrechnungsstatus</span>
<span style="top:58.40px;font-size:8.6px;line-height:12px;color:#111;-webkit-text-stroke:0.28px;left:517.5px;transform:scaleX(0.9157);transform-origin:0 0;">Zuordnung über</span>
<span style="top:80.40px;font-size:10.4px;line-height:15px;color:#303030;-webkit-text-stroke:0.22px;left:248px;transform:scaleX(0.9618);transform-origin:0 0;">Gesamt</span>
<span style="top:80.40px;font-size:10.4px;line-height:15px;color:#303030;-webkit-text-stroke:0.22px;left:338.7px;transform:scaleX(0.9580);transform-origin:0 0;">Alle</span>
<span style="top:80.40px;font-size:10.4px;line-height:15px;color:#303030;-webkit-text-stroke:0.22px;left:432.7px;transform:scaleX(0.9580);transform-origin:0 0;">Alle</span>
<span style="top:80.40px;font-size:10.4px;line-height:15px;color:#303030;-webkit-text-stroke:0.22px;left:528px;transform:scaleX(0.9674);transform-origin:0 0;">Tätigkeit</span>
<span style="top:78.90px;font-size:10.7px;line-height:15px;color:#262626;-webkit-text-stroke:0.2px;left:802.55px;transform:scaleX(1.0212);transform-origin:50% 0;">Berechnen</span>
<span style="top:132.70px;font-size:10.7px;line-height:15px;color:#262626;-webkit-text-stroke:0.2px;left:706.55px;transform:scaleX(1.0316);transform-origin:50% 0;">Rechnung erstellen</span>
<span style="top:108.30px;font-size:8.8px;line-height:12px;color:#111;-webkit-text-stroke:0.2px;right:7.50px;transform:scaleX(0.8964);transform-origin:100% 0;">Letzte Berechnung von 15:45:56</span>
<span style="top:136.20px;font-size:10.8px;line-height:15px;-webkit-text-stroke:0.35px;left:52.3px;transform:scaleX(1.0316);transform-origin:0 0;">Tätigkeiten</span>
<span style="top:136.20px;font-size:10.8px;line-height:15px;-webkit-text-stroke:0.35px;left:115.8px;">€ 7.760,25</span>
<span style="top:136.20px;font-size:10.8px;line-height:15px;-webkit-text-stroke:0.35px;left:175.2px;transform:scaleX(1.0159);transform-origin:0 0;">Verbrauch</span>
<span style="top:136.20px;font-size:10.8px;line-height:15px;-webkit-text-stroke:0.35px;left:233.9px;">€ 385,00</span>
<span style="top:136.20px;font-size:10.8px;line-height:15px;-webkit-text-stroke:0.35px;left:284.7px;transform:scaleX(1.0457);transform-origin:0 0;">Kalkulationssumme</span>
<span style="top:136.20px;font-size:10.8px;line-height:15px;-webkit-text-stroke:0.35px;left:391.6px;">€ 8.145,25</span>
<span style="top:178.50px;font-size:12px;line-height:17px;font-weight:700;-webkit-text-stroke:0.2px;left:49px;transform:scaleX(0.9226);transform-origin:0 0;">Arbeitsstunden</span>
<span style="top:178.50px;font-size:12.3px;line-height:17px;-webkit-text-stroke:0.22px;left:149.8px;transform:scaleX(0.9583);transform-origin:0 0;">Spaltenüberschrift hier her ziehen um zu gruppieren</span>
<span style="top:209.10px;font-size:12.2px;line-height:17px;font-weight:700;-webkit-text-stroke:0.2px;left:48.7px;transform:scaleX(0.8702);transform-origin:0 0;">Spru...</span>
<span style="top:209.10px;font-size:12.2px;line-height:17px;font-weight:700;-webkit-text-stroke:0.2px;left:97px;transform:scaleX(0.8798);transform-origin:0 0;">Tätigkeit</span>
<span style="top:208.90px;font-size:11.7px;line-height:16px;color:#e3e7eb;-webkit-text-stroke:0.38px;left:197.6px;transform:scaleX(1.0221);transform-origin:0 0;">Datum</span>
<span style="top:208.90px;font-size:11.7px;line-height:16px;color:#e3e7eb;-webkit-text-stroke:0.38px;left:282.8px;transform:scaleX(1.0150);transform-origin:0 0;">von Zeit</span>
<span style="top:209.10px;font-size:10px;line-height:14px;color:#e4e7ea;-webkit-text-stroke:0.25px;left:246.6px;">1</span>
<span style="top:209.10px;font-size:10px;line-height:14px;color:#e4e7ea;-webkit-text-stroke:0.25px;left:337.8px;">2</span>
<span style="top:209.10px;font-size:12.2px;line-height:17px;font-weight:700;-webkit-text-stroke:0.2px;left:374px;transform:scaleX(0.8835);transform-origin:0 0;">bis Zeit</span>
<span style="top:209.10px;font-size:12.2px;line-height:17px;font-weight:700;-webkit-text-stroke:0.2px;left:440.9px;transform:scaleX(0.9176);transform-origin:0 0;">Dauer</span>
<span style="top:209.10px;font-size:12.2px;line-height:17px;font-weight:700;-webkit-text-stroke:0.2px;left:510.5px;transform:scaleX(0.8569);transform-origin:0 0;">Kosten</span>
<span style="top:209.10px;font-size:12.2px;line-height:17px;font-weight:700;-webkit-text-stroke:0.2px;left:575.5px;transform:scaleX(0.9373);transform-origin:0 0;">MA...</span>
<span style="top:209.10px;font-size:12.2px;line-height:17px;font-weight:700;-webkit-text-stroke:0.2px;left:633px;transform:scaleX(0.8908);transform-origin:0 0;">Rechnungspositionen</span>
<span style="top:209.10px;font-size:12.2px;line-height:17px;font-weight:700;-webkit-text-stroke:0.2px;left:776.5px;transform:scaleX(0.8883);transform-origin:0 0;">Verrechnungsstatus</span>
<span style="top:209.10px;font-size:12.2px;line-height:17px;font-weight:700;-webkit-text-stroke:0.2px;left:910px;transform:scaleX(0.8675);transform-origin:0 0;">Rechnung</span>
<span style="top:234.30px;font-size:11px;line-height:15px;font-weight:700;color:#020500;left:97px;transform:scaleX(0.8308);transform-origin:0 0;">Besprechung</span>
<span style="top:234.30px;font-size:11px;line-height:15px;font-weight:700;color:#020500;right:780.50px;transform:scaleX(0.9135);transform-origin:100% 0;">Mo, 09.09.2024</span>
<span style="top:234.30px;font-size:11px;line-height:15px;font-weight:700;color:#020500;right:687.90px;transform:scaleX(0.9026);transform-origin:100% 0;">13:00</span>
<span style="top:234.30px;font-size:11px;line-height:15px;font-weight:700;color:#020500;right:621.20px;transform:scaleX(0.9026);transform-origin:100% 0;">17:15</span>
<span style="top:234.30px;font-size:11px;line-height:15px;font-weight:700;color:#020500;right:561.00px;transform:scaleX(0.9026);transform-origin:100% 0;">04:15</span>
<span style="top:234.30px;font-size:11px;line-height:15px;font-weight:700;color:#020500;right:487.00px;transform:scaleX(0.9176);transform-origin:100% 0;">€ 387,77</span>
<span style="top:234.30px;font-size:11px;line-height:15px;font-weight:700;color:#020500;left:575.5px;transform:scaleX(0.8810);transform-origin:0 0;">TM</span>
<span style="top:234.30px;font-size:11px;line-height:15px;font-weight:700;color:#020500;left:633px;transform:scaleX(0.8245);transform-origin:0 0;">Leistung</span>
<span style="top:234.30px;font-size:11px;line-height:15px;font-weight:700;color:#020500;left:776.5px;transform:scaleX(0.8791);transform-origin:0 0;">Verrechnet</span>
<span style="top:234.30px;font-size:11px;line-height:15px;font-weight:700;color:#020500;left:938.8px;transform:scaleX(0.8938);transform-origin:0 0;">R-2024-108 - 508,</span>
<span style="top:255.63px;font-size:11px;line-height:15px;font-weight:700;color:#020500;left:97px;transform:scaleX(0.8480);transform-origin:0 0;">Angebotserstellung</span>
<span style="top:255.63px;font-size:11px;line-height:15px;font-weight:700;color:#020500;right:780.50px;transform:scaleX(0.8895);transform-origin:100% 0;">Di, 10.09.2024</span>
<span style="top:255.63px;font-size:11px;line-height:15px;font-weight:700;color:#020500;right:687.90px;transform:scaleX(0.9026);transform-origin:100% 0;">07:30</span>
<span style="top:255.63px;font-size:11px;line-height:15px;font-weight:700;color:#020500;right:621.20px;transform:scaleX(0.9026);transform-origin:100% 0;">12:00</span>
<span style="top:255.63px;font-size:11px;line-height:15px;font-weight:700;color:#020500;right:561.00px;transform:scaleX(0.9026);transform-origin:100% 0;">04:30</span>
<span style="top:255.63px;font-size:11px;line-height:15px;font-weight:700;color:#020500;right:487.00px;transform:scaleX(0.9176);transform-origin:100% 0;">€ 241,52</span>
<span style="top:255.63px;font-size:11px;line-height:15px;font-weight:700;color:#020500;left:575.5px;transform:scaleX(0.8810);transform-origin:0 0;">TM</span>
<span style="top:255.63px;font-size:11px;line-height:15px;font-weight:700;color:#020500;left:633px;transform:scaleX(0.8083);transform-origin:0 0;">Sonstiges</span>
<span style="top:255.63px;font-size:11px;line-height:15px;font-weight:700;color:#020500;left:776.5px;transform:scaleX(0.8791);transform-origin:0 0;">Verrechnet</span>
<span style="top:255.63px;font-size:11px;line-height:15px;font-weight:700;color:#020500;left:938.8px;transform:scaleX(0.8938);transform-origin:0 0;">R-2024-108 - 508,</span>
<span style="top:276.97px;font-size:11px;line-height:15px;font-weight:700;color:#020500;left:97px;transform:scaleX(0.8423);transform-origin:0 0;">Begehung</span>
<span style="top:276.97px;font-size:11px;line-height:15px;font-weight:700;color:#020500;right:780.50px;transform:scaleX(0.8895);transform-origin:100% 0;">Di, 10.09.2024</span>
<span style="top:276.97px;font-size:11px;line-height:15px;font-weight:700;color:#020500;right:687.90px;transform:scaleX(0.9026);transform-origin:100% 0;">13:00</span>
<span style="top:276.97px;font-size:11px;line-height:15px;font-weight:700;color:#020500;right:621.20px;transform:scaleX(0.9026);transform-origin:100% 0;">17:30</span>
<span style="top:276.97px;font-size:11px;line-height:15px;font-weight:700;color:#020500;right:561.00px;transform:scaleX(0.9026);transform-origin:100% 0;">04:30</span>
<span style="top:276.97px;font-size:11px;line-height:15px;font-weight:700;color:#020500;right:487.00px;transform:scaleX(0.9176);transform-origin:100% 0;">€ 483,03</span>
<span style="top:276.97px;font-size:11px;line-height:15px;font-weight:700;color:#020500;left:575.5px;transform:scaleX(0.8810);transform-origin:0 0;">TM</span>
<span style="top:276.97px;font-size:11px;line-height:15px;font-weight:700;color:#020500;left:633px;transform:scaleX(0.8245);transform-origin:0 0;">Leistung</span>
<span style="top:276.97px;font-size:11px;line-height:15px;font-weight:700;color:#020500;left:776.5px;transform:scaleX(0.8791);transform-origin:0 0;">Verrechnet</span>
<span style="top:276.97px;font-size:11px;line-height:15px;font-weight:700;color:#020500;left:938.8px;transform:scaleX(0.8938);transform-origin:0 0;">R-2024-108 - 508,</span>
<span style="top:298.30px;font-size:11px;line-height:15px;font-weight:700;color:#020500;left:97px;transform:scaleX(0.8592);transform-origin:0 0;">Bestandsaufnahme</span>
<span style="top:298.30px;font-size:11px;line-height:15px;font-weight:700;color:#020500;right:780.50px;transform:scaleX(0.9109);transform-origin:100% 0;">Mi, 11.09.2024</span>
<span style="top:298.30px;font-size:11px;line-height:15px;font-weight:700;color:#020500;right:687.90px;transform:scaleX(0.9026);transform-origin:100% 0;">07:20</span>
<span style="top:298.30px;font-size:11px;line-height:15px;font-weight:700;color:#020500;right:621.20px;transform:scaleX(0.9026);transform-origin:100% 0;">12:00</span>
<span style="top:298.30px;font-size:11px;line-height:15px;font-weight:700;color:#020500;right:561.00px;transform:scaleX(0.9026);transform-origin:100% 0;">04:40</span>
<span style="top:298.30px;font-size:11px;line-height:15px;font-weight:700;color:#020500;right:487.00px;transform:scaleX(0.9176);transform-origin:100% 0;">€ 500,92</span>
<span style="top:298.30px;font-size:11px;line-height:15px;font-weight:700;color:#020500;left:575.5px;transform:scaleX(0.8810);transform-origin:0 0;">TM</span>
<span style="top:298.30px;font-size:11px;line-height:15px;font-weight:700;color:#020500;left:633px;transform:scaleX(0.8245);transform-origin:0 0;">Leistung</span>
<span style="top:298.30px;font-size:11px;line-height:15px;font-weight:700;color:#020500;left:776.5px;transform:scaleX(0.8791);transform-origin:0 0;">Verrechnet</span>
<span style="top:298.30px;font-size:11px;line-height:15px;font-weight:700;color:#020500;left:938.8px;transform:scaleX(0.8938);transform-origin:0 0;">R-2024-108 - 508,</span>
<span style="top:319.63px;font-size:11px;line-height:15px;font-weight:700;color:#020500;left:97px;transform:scaleX(0.8592);transform-origin:0 0;">Bestandsaufnahme</span>
<span style="top:319.63px;font-size:11px;line-height:15px;font-weight:700;color:#020500;right:780.50px;transform:scaleX(0.9109);transform-origin:100% 0;">Mi, 11.09.2024</span>
<span style="top:319.63px;font-size:11px;line-height:15px;font-weight:700;color:#020500;right:687.90px;transform:scaleX(0.9026);transform-origin:100% 0;">12:30</span>
<span style="top:319.63px;font-size:11px;line-height:15px;font-weight:700;color:#020500;right:621.20px;transform:scaleX(0.9026);transform-origin:100% 0;">17:10</span>
<span style="top:319.63px;font-size:11px;line-height:15px;font-weight:700;color:#020500;right:561.00px;transform:scaleX(0.9026);transform-origin:100% 0;">04:40</span>
<span style="top:319.63px;font-size:11px;line-height:15px;font-weight:700;color:#020500;right:487.00px;transform:scaleX(0.9176);transform-origin:100% 0;">€ 500,92</span>
<span style="top:319.63px;font-size:11px;line-height:15px;font-weight:700;color:#020500;left:575.5px;transform:scaleX(0.8810);transform-origin:0 0;">TM</span>
<span style="top:319.63px;font-size:11px;line-height:15px;font-weight:700;color:#020500;left:633px;transform:scaleX(0.8245);transform-origin:0 0;">Leistung</span>
<span style="top:319.63px;font-size:11px;line-height:15px;font-weight:700;color:#020500;left:776.5px;transform:scaleX(0.8791);transform-origin:0 0;">Verrechnet</span>
<span style="top:319.63px;font-size:11px;line-height:15px;font-weight:700;color:#020500;left:938.8px;transform:scaleX(0.8938);transform-origin:0 0;">R-2024-108 - 508,</span>
<span style="top:340.97px;font-size:11px;line-height:15px;font-weight:700;color:#020500;left:97px;transform:scaleX(0.8592);transform-origin:0 0;">Bestandsaufnahme</span>
<span style="top:340.97px;font-size:11px;line-height:15px;font-weight:700;color:#020500;right:780.50px;transform:scaleX(0.9005);transform-origin:100% 0;">Do, 12.09.2024</span>
<span style="top:340.97px;font-size:11px;line-height:15px;font-weight:700;color:#020500;right:687.90px;transform:scaleX(0.9026);transform-origin:100% 0;">07:30</span>
<span style="top:340.97px;font-size:11px;line-height:15px;font-weight:700;color:#020500;right:621.20px;transform:scaleX(0.9026);transform-origin:100% 0;">12:10</span>
<span style="top:340.97px;font-size:11px;line-height:15px;font-weight:700;color:#020500;right:561.00px;transform:scaleX(0.9026);transform-origin:100% 0;">04:40</span>
<span style="top:340.97px;font-size:11px;line-height:15px;font-weight:700;color:#020500;right:487.00px;transform:scaleX(0.9176);transform-origin:100% 0;">€ 500,92</span>
<span style="top:340.97px;font-size:11px;line-height:15px;font-weight:700;color:#020500;left:575.5px;transform:scaleX(0.8810);transform-origin:0 0;">TM</span>
<span style="top:340.97px;font-size:11px;line-height:15px;font-weight:700;color:#020500;left:633px;transform:scaleX(0.8245);transform-origin:0 0;">Leistung</span>
<span style="top:340.97px;font-size:11px;line-height:15px;font-weight:700;color:#020500;left:776.5px;transform:scaleX(0.8791);transform-origin:0 0;">Verrechnet</span>
<span style="top:340.97px;font-size:11px;line-height:15px;font-weight:700;color:#020500;left:938.8px;transform:scaleX(0.8938);transform-origin:0 0;">R-2024-106 - 508,</span>
<span style="top:362.30px;font-size:11px;line-height:15px;font-weight:700;color:#020500;left:97px;transform:scaleX(0.8592);transform-origin:0 0;">Bestandsaufnahme</span>
<span style="top:362.30px;font-size:11px;line-height:15px;font-weight:700;color:#020500;right:780.50px;transform:scaleX(0.9005);transform-origin:100% 0;">Do, 12.09.2024</span>
<span style="top:362.30px;font-size:11px;line-height:15px;font-weight:700;color:#020500;right:687.90px;transform:scaleX(0.9026);transform-origin:100% 0;">12:45</span>
<span style="top:362.30px;font-size:11px;line-height:15px;font-weight:700;color:#020500;right:621.20px;transform:scaleX(0.9026);transform-origin:100% 0;">17:25</span>
<span style="top:362.30px;font-size:11px;line-height:15px;font-weight:700;color:#020500;right:561.00px;transform:scaleX(0.9026);transform-origin:100% 0;">04:40</span>
<span style="top:362.30px;font-size:11px;line-height:15px;font-weight:700;color:#020500;right:487.00px;transform:scaleX(0.9176);transform-origin:100% 0;">€ 500,92</span>
<span style="top:362.30px;font-size:11px;line-height:15px;font-weight:700;color:#020500;left:575.5px;transform:scaleX(0.8810);transform-origin:0 0;">TM</span>
<span style="top:362.30px;font-size:11px;line-height:15px;font-weight:700;color:#020500;left:633px;transform:scaleX(0.8245);transform-origin:0 0;">Leistung</span>
<span style="top:362.30px;font-size:11px;line-height:15px;font-weight:700;color:#020500;left:776.5px;transform:scaleX(0.8791);transform-origin:0 0;">Verrechnet</span>
<span style="top:362.30px;font-size:11px;line-height:15px;font-weight:700;color:#020500;left:938.8px;transform:scaleX(0.8938);transform-origin:0 0;">R-2024-106 - 508,</span>
<span style="top:383.63px;font-size:11px;line-height:15px;font-weight:700;color:#020500;left:97px;transform:scaleX(0.8592);transform-origin:0 0;">Bestandsaufnahme</span>
<span style="top:383.63px;font-size:11px;line-height:15px;font-weight:700;color:#020500;right:780.50px;transform:scaleX(0.8803);transform-origin:100% 0;">Fr, 13.09.2024</span>
<span style="top:383.63px;font-size:11px;line-height:15px;font-weight:700;color:#020500;right:687.90px;transform:scaleX(0.9026);transform-origin:100% 0;">07:15</span>
<span style="top:383.63px;font-size:11px;line-height:15px;font-weight:700;color:#020500;right:621.20px;transform:scaleX(0.9226);transform-origin:100% 0;">11:55</span>
<span style="top:383.63px;font-size:11px;line-height:15px;font-weight:700;color:#020500;right:561.00px;transform:scaleX(0.9026);transform-origin:100% 0;">04:40</span>
<span style="top:383.63px;font-size:11px;line-height:15px;font-weight:700;color:#020500;right:487.00px;transform:scaleX(0.9176);transform-origin:100% 0;">€ 500,92</span>
<span style="top:383.63px;font-size:11px;line-height:15px;font-weight:700;color:#020500;left:575.5px;transform:scaleX(0.8810);transform-origin:0 0;">TM</span>
<span style="top:383.63px;font-size:11px;line-height:15px;font-weight:700;color:#020500;left:633px;transform:scaleX(0.8245);transform-origin:0 0;">Leistung</span>
<span style="top:383.63px;font-size:11px;line-height:15px;font-weight:700;color:#020500;left:776.5px;transform:scaleX(0.8791);transform-origin:0 0;">Verrechnet</span>
<span style="top:383.63px;font-size:11px;line-height:15px;font-weight:700;color:#020500;left:938.8px;transform:scaleX(0.8938);transform-origin:0 0;">R-2024-106 - 508,</span>
<span style="top:404.96px;font-size:11px;line-height:15px;font-weight:700;color:#020500;left:97px;transform:scaleX(0.8592);transform-origin:0 0;">Bestandsaufnahme</span>
<span style="top:404.96px;font-size:11px;line-height:15px;font-weight:700;color:#020500;right:780.50px;transform:scaleX(0.9135);transform-origin:100% 0;">Mo, 16.09.2024</span>
<span style="top:404.96px;font-size:11px;line-height:15px;font-weight:700;color:#020500;right:687.90px;transform:scaleX(0.9026);transform-origin:100% 0;">12:30</span>
<span style="top:404.96px;font-size:11px;line-height:15px;font-weight:700;color:#020500;right:621.20px;transform:scaleX(0.9026);transform-origin:100% 0;">17:10</span>
<span style="top:404.96px;font-size:11px;line-height:15px;font-weight:700;color:#020500;right:561.00px;transform:scaleX(0.9026);transform-origin:100% 0;">04:40</span>
<span style="top:404.96px;font-size:11px;line-height:15px;font-weight:700;color:#020500;right:487.00px;transform:scaleX(0.9176);transform-origin:100% 0;">€ 500,92</span>
<span style="top:404.96px;font-size:11px;line-height:15px;font-weight:700;color:#020500;left:575.5px;transform:scaleX(0.8810);transform-origin:0 0;">TM</span>
<span style="top:404.96px;font-size:11px;line-height:15px;font-weight:700;color:#020500;left:633px;transform:scaleX(0.8245);transform-origin:0 0;">Leistung</span>
<span style="top:404.96px;font-size:11px;line-height:15px;font-weight:700;color:#020500;left:776.5px;transform:scaleX(0.8791);transform-origin:0 0;">Verrechnet</span>
<span style="top:404.96px;font-size:11px;line-height:15px;font-weight:700;color:#020500;left:938.8px;transform:scaleX(0.8938);transform-origin:0 0;">R-2024-106 - 508,</span>
<span style="top:426.30px;font-size:11px;line-height:15px;font-weight:700;color:#020500;left:97px;transform:scaleX(0.8592);transform-origin:0 0;">Bestandsaufnahme</span>
<span style="top:426.30px;font-size:11px;line-height:15px;font-weight:700;color:#020500;right:780.50px;transform:scaleX(0.8895);transform-origin:100% 0;">Di, 17.09.2024</span>
<span style="top:426.30px;font-size:11px;line-height:15px;font-weight:700;color:#020500;right:687.90px;transform:scaleX(0.9026);transform-origin:100% 0;">07:30</span>
<span style="top:426.30px;font-size:11px;line-height:15px;font-weight:700;color:#020500;right:621.20px;transform:scaleX(0.9026);transform-origin:100% 0;">12:10</span>
<span style="top:426.30px;font-size:11px;line-height:15px;font-weight:700;color:#020500;right:561.00px;transform:scaleX(0.9026);transform-origin:100% 0;">04:40</span>
<span style="top:426.30px;font-size:11px;line-height:15px;font-weight:700;color:#020500;right:487.00px;transform:scaleX(0.9176);transform-origin:100% 0;">€ 500,92</span>
<span style="top:426.30px;font-size:11px;line-height:15px;font-weight:700;color:#020500;left:575.5px;transform:scaleX(0.8810);transform-origin:0 0;">TM</span>
<span style="top:426.30px;font-size:11px;line-height:15px;font-weight:700;color:#020500;left:633px;transform:scaleX(0.8245);transform-origin:0 0;">Leistung</span>
<span style="top:426.30px;font-size:11px;line-height:15px;font-weight:700;color:#020500;left:776.5px;transform:scaleX(0.8791);transform-origin:0 0;">Verrechnet</span>
<span style="top:426.30px;font-size:11px;line-height:15px;font-weight:700;color:#020500;left:938.8px;transform:scaleX(0.8938);transform-origin:0 0;">R-2024-106 - 508,</span>
<span style="top:447.63px;font-size:11px;line-height:15px;font-weight:700;color:#020500;left:97px;transform:scaleX(0.8460);transform-origin:0 0;">Berechnung</span>
<span style="top:447.63px;font-size:11px;line-height:15px;font-weight:700;color:#020500;right:780.50px;transform:scaleX(0.8895);transform-origin:100% 0;">Di, 17.09.2024</span>
<span style="top:447.63px;font-size:11px;line-height:15px;font-weight:700;color:#020500;right:687.90px;transform:scaleX(0.9026);transform-origin:100% 0;">12:45</span>
<span style="top:447.63px;font-size:11px;line-height:15px;font-weight:700;color:#020500;right:621.20px;transform:scaleX(0.9026);transform-origin:100% 0;">17:25</span>
<span style="top:447.63px;font-size:11px;line-height:15px;font-weight:700;color:#020500;right:561.00px;transform:scaleX(0.9026);transform-origin:100% 0;">04:40</span>
<span style="top:447.63px;font-size:11px;line-height:15px;font-weight:700;color:#020500;right:487.00px;transform:scaleX(0.9176);transform-origin:100% 0;">€ 500,92</span>
<span style="top:447.63px;font-size:11px;line-height:15px;font-weight:700;color:#020500;left:575.5px;transform:scaleX(0.8810);transform-origin:0 0;">TM</span>
<span style="top:447.63px;font-size:11px;line-height:15px;font-weight:700;color:#020500;left:633px;transform:scaleX(0.8245);transform-origin:0 0;">Leistung</span>
<span style="top:447.63px;font-size:11px;line-height:15px;font-weight:700;color:#020500;left:776.5px;transform:scaleX(0.8791);transform-origin:0 0;">Verrechnet</span>
<span style="top:447.63px;font-size:11px;line-height:15px;font-weight:700;color:#020500;left:938.8px;transform:scaleX(0.8938);transform-origin:0 0;">R-2024-106 - 508,</span>
<span style="top:468.96px;font-size:11px;line-height:15px;font-weight:700;color:#020500;left:97px;transform:scaleX(0.8460);transform-origin:0 0;">Berechnung</span>
<span style="top:468.96px;font-size:11px;line-height:15px;font-weight:700;color:#020500;right:780.50px;transform:scaleX(0.9034);transform-origin:100% 0;">Mi, 18.09.2024</span>
<span style="top:468.96px;font-size:11px;line-height:15px;font-weight:700;color:#020500;right:687.90px;transform:scaleX(0.9026);transform-origin:100% 0;">07:30</span>
<span style="top:468.96px;font-size:11px;line-height:15px;font-weight:700;color:#020500;right:621.20px;transform:scaleX(0.9026);transform-origin:100% 0;">12:10</span>
<span style="top:468.96px;font-size:11px;line-height:15px;font-weight:700;color:#020500;right:561.00px;transform:scaleX(0.9026);transform-origin:100% 0;">04:40</span>
<span style="top:468.96px;font-size:11px;line-height:15px;font-weight:700;color:#020500;right:487.00px;transform:scaleX(0.9176);transform-origin:100% 0;">€ 500,92</span>
<span style="top:468.96px;font-size:11px;line-height:15px;font-weight:700;color:#020500;left:575.5px;transform:scaleX(0.8810);transform-origin:0 0;">TM</span>
<span style="top:468.96px;font-size:11px;line-height:15px;font-weight:700;color:#020500;left:633px;transform:scaleX(0.8245);transform-origin:0 0;">Leistung</span>
<span style="top:468.96px;font-size:11px;line-height:15px;font-weight:700;color:#020500;left:776.5px;transform:scaleX(0.8791);transform-origin:0 0;">Verrechnet</span>
<span style="top:468.96px;font-size:11px;line-height:15px;font-weight:700;color:#020500;left:938.8px;transform:scaleX(0.8938);transform-origin:0 0;">R-2024-106 - 508,</span>
<span style="top:492.80px;font-size:11px;line-height:15px;font-weight:700;color:#000;-webkit-text-stroke:0.15px;right:557.30px;transform:scaleX(0.8991);transform-origin:100% 0;">75:55</span>
<span style="top:492.80px;font-size:11px;line-height:15px;font-weight:700;color:#000;-webkit-text-stroke:0.15px;right:483.50px;transform:scaleX(0.9192);transform-origin:100% 0;">€ 7.760,25</span>
<span style="top:552.30px;font-size:12px;line-height:17px;font-weight:700;-webkit-text-stroke:0.2px;left:49.4px;transform:scaleX(0.9281);transform-origin:0 0;">Verbrauchsmaterial</span>
<span style="top:552.30px;font-size:12.3px;line-height:17px;-webkit-text-stroke:0.22px;left:172.6px;transform:scaleX(0.9583);transform-origin:0 0;">Spaltenüberschrift hier her ziehen um zu gruppieren</span>
<span style="top:582.90px;font-size:12.2px;line-height:17px;font-weight:700;-webkit-text-stroke:0.2px;left:48.7px;transform:scaleX(0.8702);transform-origin:0 0;">Spru...</span>
<span style="top:582.90px;font-size:12.2px;line-height:17px;font-weight:700;-webkit-text-stroke:0.2px;left:120px;transform:scaleX(0.8810);transform-origin:0 0;">Anzahl</span>
<span style="top:582.90px;font-size:12.2px;line-height:17px;font-weight:700;-webkit-text-stroke:0.2px;left:208px;transform:scaleX(0.9282);transform-origin:0 0;">Datum</span>
<span style="top:582.90px;font-size:12.2px;line-height:17px;font-weight:700;-webkit-text-stroke:0.2px;left:289.4px;transform:scaleX(0.9008);transform-origin:0 0;">von Zeit</span>
<span style="top:582.90px;font-size:12.2px;line-height:17px;font-weight:700;-webkit-text-stroke:0.2px;left:382.4px;transform:scaleX(0.8694);transform-origin:0 0;">bis Zeit</span>
<span style="top:582.90px;font-size:12.2px;line-height:17px;font-weight:700;-webkit-text-stroke:0.2px;left:471.6px;transform:scaleX(0.8787);transform-origin:0 0;">Kosten</span>
<span style="top:582.90px;font-size:12.2px;line-height:17px;font-weight:700;-webkit-text-stroke:0.2px;left:537px;transform:scaleX(0.8869);transform-origin:0 0;">Rechnungspositionen</span>
<span style="top:582.90px;font-size:12.2px;line-height:17px;font-weight:700;-webkit-text-stroke:0.2px;left:695px;transform:scaleX(0.9091);transform-origin:0 0;">Verrechnun...</span>
<span style="top:582.90px;font-size:12.2px;line-height:17px;font-weight:700;-webkit-text-stroke:0.2px;left:799.4px;transform:scaleX(0.8726);transform-origin:0 0;">Rechnung</span>
<span style="top:607.60px;font-size:11px;line-height:15px;font-weight:700;color:#020500;right:877.60px;transform:scaleX(0.9169);transform-origin:100% 0;">110,00</span>
<span style="top:607.60px;font-size:11px;line-height:15px;font-weight:700;color:#020500;right:789.70px;transform:scaleX(0.9020);transform-origin:100% 0;">Di, 01.10.2024</span>
<span style="top:607.60px;font-size:11px;line-height:15px;font-weight:700;color:#020500;right:701.00px;transform:scaleX(0.9133);transform-origin:100% 0;">15:30</span>
<span style="top:607.60px;font-size:11px;line-height:15px;font-weight:700;color:#020500;right:613.20px;transform:scaleX(0.8919);transform-origin:100% 0;">17:30</span>
<span style="top:607.60px;font-size:11px;line-height:15px;font-weight:700;color:#020500;right:525.40px;transform:scaleX(0.8943);transform-origin:100% 0;">€ 385,00</span>
<span style="top:607.60px;font-size:11px;line-height:15px;font-weight:700;color:#020500;left:537px;transform:scaleX(0.8329);transform-origin:0 0;">Barauslagen</span>
<span style="top:607.60px;font-size:11px;line-height:15px;font-weight:700;color:#020500;left:695px;transform:scaleX(0.8791);transform-origin:0 0;">Verrechnet</span>
<span style="top:607.60px;font-size:11px;line-height:15px;font-weight:700;color:#020500;left:828.4px;transform:scaleX(0.8964);transform-origin:0 0;">R-2024-10</span>
<span style="top:858.90px;font-size:11px;line-height:15px;font-weight:700;color:#000;-webkit-text-stroke:0.15px;right:873.90px;transform:scaleX(0.9532);transform-origin:100% 0;">110,00</span>
<span style="top:858.90px;font-size:11px;line-height:15px;font-weight:700;color:#000;-webkit-text-stroke:0.15px;right:522.00px;transform:scaleX(0.9340);transform-origin:100% 0;">€ 385,00</span>
</div>
</body></html>
